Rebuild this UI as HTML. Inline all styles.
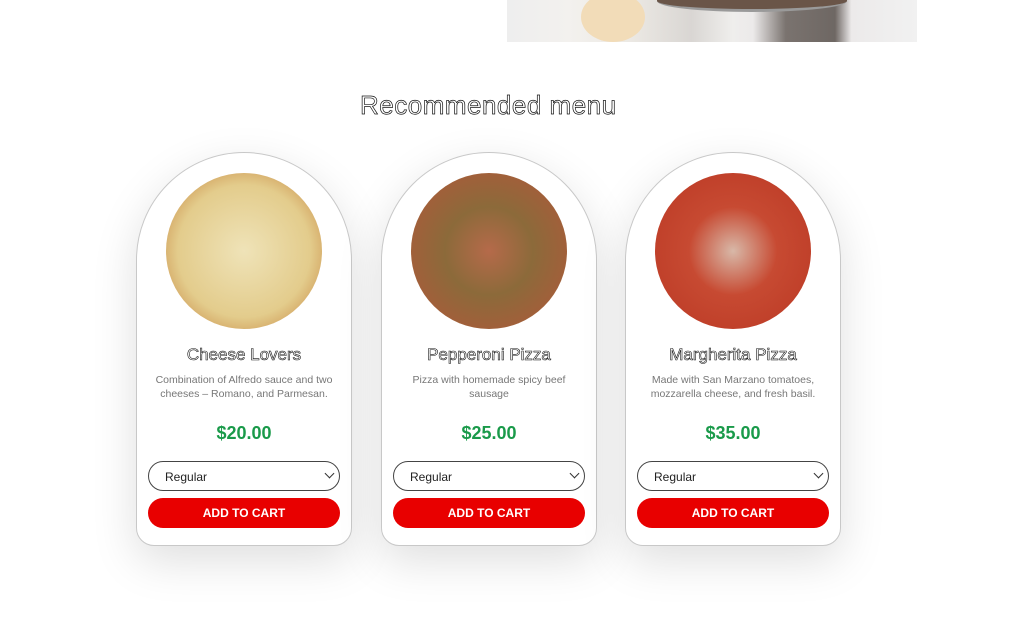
<!DOCTYPE html>
<html><head><meta charset="utf-8"><style>
*{margin:0;padding:0;box-sizing:border-box}
body{width:1009px;height:639px;background:#fff;position:relative;overflow:hidden;font-family:"Liberation Sans",sans-serif}
.hero{position:absolute;left:507px;top:0;width:410px;height:42px;background:linear-gradient(90deg,#eee 0%,#f3f1ee 15%,#ece9e4 30%,#d9d6d3 45%,#efeeec 55%,#eceaea 60%,#7a736f 68%,#6e6763 80%,#eceaea 84%,#f1f1f1 100%)}
.bowl{position:absolute;left:74px;top:-8px;width:64px;height:50px;border-radius:50%;background:#f2dcb8}
.pan{position:absolute;left:150px;top:-10px;width:190px;height:22px;border-radius:0 0 50% 50%;background:#6a5548;border-bottom:3px solid #9a9a9a}
h2{position:absolute;left:360px;top:90px;font-size:26px;font-weight:normal;color:#fff;-webkit-text-stroke:0.7px #111;letter-spacing:0.5px}
.card{position:absolute;top:152px;width:216px;height:394px;border:1px solid #c8c8c8;border-radius:108px 108px 18px 18px;background:#fff;box-shadow:0 15px 45px rgba(0,0,0,0.13)}
.pz{position:absolute;left:29px;top:20px;width:156px;height:156px;border-radius:50%}
.t{position:absolute;top:192px;width:100%;text-align:center;font-size:17px;color:#fff;-webkit-text-stroke:0.6px #111}
.d{position:absolute;top:220px;left:12px;right:12px;text-align:center;font-size:10.5px;line-height:14px;color:#777}
.p{position:absolute;top:270px;width:100%;text-align:center;font-size:18px;font-weight:bold;color:#1a9a4a}
.s{position:absolute;top:308px;left:11px;width:192px;height:30px;border:1px solid #444;border-radius:15px;font-size:12px;padding:8px 0 0 16px;color:#222}
.s:after{content:"";position:absolute;right:6px;top:8px;width:6px;height:6px;border-right:1.5px solid #333;border-bottom:1.5px solid #333;transform:rotate(45deg)}
.b{position:absolute;top:345px;left:11px;width:192px;height:30px;background:#e80000;border-radius:15px;color:#fff;font-size:12px;font-weight:bold;text-align:center;line-height:30px}
</style></head><body>
<div class="hero"><div class="bowl"></div><div class="pan"></div></div>
<h2>Recommended menu</h2>
<div class="card" style="left:136px">
<div class="pz" style="background:radial-gradient(circle,#efe3b8 0%,#e3cc8c 60%,#c88a45 90%,#9a5a2a 100%)"></div>
<div class="t">Cheese Lovers</div>
<div class="d">Combination of Alfredo sauce and two cheeses – Romano, and Parmesan.</div>
<div class="p">$20.00</div><div class="s">Regular</div><div class="b">ADD TO CART</div></div>
<div class="card" style="left:381px">
<div class="pz" style="background:radial-gradient(circle,#b56a4a 0%,#8c6a3a 40%,#a0603a 70%,#d49a58 85%,#b87a40 100%)"></div>
<div class="t">Pepperoni Pizza</div>
<div class="d">Pizza with homemade spicy beef sausage</div>
<div class="p">$25.00</div><div class="s">Regular</div><div class="b">ADD TO CART</div></div>
<div class="card" style="left:625px">
<div class="pz" style="background:radial-gradient(circle,#d8b8a8 0%,#c74a32 40%,#c0402a 72%,#c8824a 86%,#9a5a30 100%)"></div>
<div class="t">Margherita Pizza</div>
<div class="d">Made with San Marzano tomatoes, mozzarella cheese, and fresh basil.</div>
<div class="p">$35.00</div><div class="s">Regular</div><div class="b">ADD TO CART</div></div>
</body></html>
